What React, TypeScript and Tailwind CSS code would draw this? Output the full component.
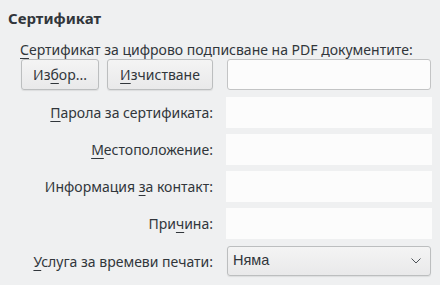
import React from 'react';

const K = ({ children }: { children: React.ReactNode }) => (
  <span className="underline decoration-1 underline-offset-[3px]">{children}</span>
);

const rows: { label: React.ReactNode }[] = [
  { label: <><K>П</K>арола за сертификата:</> },
  { label: <><K>М</K>естоположение:</> },
  { label: <>Информация <K>з</K>а контакт:</> },
  { label: <>При<K>ч</K>ина:</> },
];

const btn =
  'h-[31px] rounded-[3px] border border-[#bcbebf] bg-gradient-to-b from-[#f4f4f4] to-[#e9e9ea] text-[#31363b] shadow-[0_1px_1px_rgba(0,0,0,0.08)] flex items-center justify-center';

export default function App() {
  return (
    <div
      className="w-[440px] h-[285px] bg-[#eff0f1] text-[#31363b] text-[14px] overflow-hidden whitespace-nowrap"
      style={{ fontFamily: '"Noto Sans", "Open Sans", sans-serif' }}
    >
      {/* Section title */}
      <div className="pl-[8px] pt-[8px] font-bold leading-[20px] text-[15px]">Сертификат</div>

      <div className="pl-[20px] pr-[8px]">
        <div className="mt-[13px] leading-[18px]">
          <K>С</K>ертификат за цифрово подписване на PDF документите:
        </div>

        <div className="grid grid-cols-[193px_206px] gap-x-[13px] mt-[0px]">
          {/* Buttons + file field */}
          <div className="flex gap-[8px] pl-[1px] h-[31px]">
            <button className={`${btn} w-[78px]`}>
              <span>Из<K>б</K>ор...</span>
            </button>
            <button className={`${btn} w-[106px]`}>
              <span><K>И</K>зчистване</span>
            </button>
          </div>
          <div className="h-[31px] rounded-[3px] border border-[#c3c4c5] bg-[#fcfcfc] ml-[1px] mr-[1px]" />

          {rows.map((r, i) => (
            <React.Fragment key={i}>
              <div className={`${i === 0 ? 'mt-[7px]' : 'mt-[6px]'} h-[31px] flex items-center justify-end`}>
                <span>{r.label}</span>
              </div>
              <div className={`${i === 0 ? 'mt-[7px]' : 'mt-[6px]'} h-[31px] bg-[#fcfcfc]`} />
            </React.Fragment>
          ))}

          <div className="mt-[7px] h-[30px] flex items-center justify-end">
            <span><K>У</K>слуга за времеви печати:</span>
          </div>
          <div className="mt-[7px] h-[30px] ml-[1px] mr-[1px] rounded-[3px] border border-[#bcbebf] bg-gradient-to-b from-[#f4f4f4] to-[#e9e9ea] shadow-[0_1px_1px_rgba(0,0,0,0.08)] flex items-center justify-between pl-[5px] pr-[9px]">
            <span style={{ fontFamily: '"Liberation Sans", Arial, sans-serif' }} className="text-[14.5px]">
              Няма
            </span>
            <svg width="10" height="6" viewBox="0 0 10 6" fill="none">
              <path d="M0.5 0.5L5 5L9.5 0.5" stroke="#4d5257" strokeWidth="1" />
            </svg>
          </div>
        </div>
      </div>
    </div>
  );
}
